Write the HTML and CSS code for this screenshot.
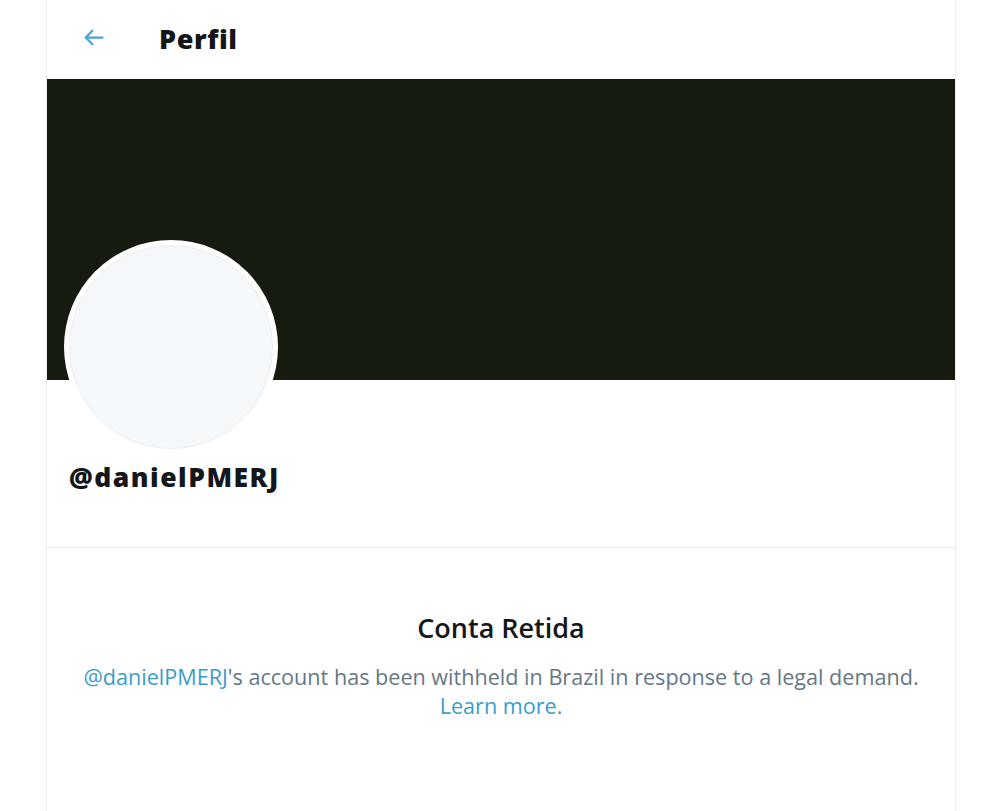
FILE: index.html
```html
<!DOCTYPE html>
<html lang="pt">
<head>
<meta charset="utf-8">
<title>Perfil</title>
<link rel="stylesheet" href="styles.css">
</head>
<body>
<main class="column">
  <header class="topbar">
    <span class="back" aria-label="Voltar">
      <svg viewBox="0 0 24 24" width="27" height="27"><path d="M20 11H7.414l4.293-4.293a1 1 0 0 0-1.414-1.414l-6 6a1 1 0 0 0 0 1.414l6 6a.996.996 0 0 0 1.414 0 1 1 0 0 0 0-1.414L7.414 13H20a1 1 0 1 0 0-2z" fill="#47a3d9"/></svg>
    </span>
    <h1 class="title">Perfil</h1>
  </header>
  <div class="banner"></div>
  <section class="profile">
    <div class="avatar"><div class="avatar-inner"></div></div>
    <div class="handle">@danielPMERJ</div>
  </section>
  <section class="withheld">
    <h2 class="withheld-title">Conta Retida</h2>
    <p class="withheld-text"><a class="link">@danielPMERJ</a>'s account has been withheld in Brazil in response to a legal demand. <a class="link">Learn more.</a></p>
  </section>
</main>
</body>
</html>
```
FILE: styles.css
```css
html, body {
  margin: 0;
  padding: 0;
  background: #ffffff;
}
body {
  font-family: "Open Sans", "Noto Sans", "Liberation Sans", sans-serif;
  color: #14171a;
}
.column {
  margin-left: 46px;
  width: 910px;
  min-height: 811px;
  box-sizing: border-box;
  border-left: 1px solid #eceeef;
  border-right: 1px solid #eceeef;
}
.topbar {
  height: 79px;
  display: flex;
  align-items: center;
  box-sizing: border-box;
  padding-left: 33px;
}
.back {
  display: flex;
  width: 27px;
  height: 27px;
  margin-top: -4px;
}
.title {
  margin: -3px 0 0 52px;
  font-size: 27px;
  font-weight: 800;
  color: #14171a;
  letter-spacing: 0.6px;
}
.banner {
  height: 301px;
  background: #161b10;
}
.profile {
  display: flow-root;
  height: 168px;
  box-sizing: border-box;
  padding-left: 17px;
  border-bottom: 1px solid #e8eaeb;
}
.avatar {
  width: 214px;
  height: 214px;
  border-radius: 50%;
  background: #ffffff;
  margin-top: -140px;
  box-sizing: border-box;
  padding: 6px;
  position: relative;
}
.avatar-inner {
  width: 100%;
  height: 100%;
  border-radius: 50%;
  background: #f5f8fa;
  box-shadow: 0 0 0 1px #eceeef;
}
.handle {
  font-size: 26.5px;
  font-weight: 800;
  letter-spacing: 1.5px;
  line-height: 36px;
  margin-top: 5px;
  margin-left: 5px;
  color: #14171a;
}
.withheld {
  text-align: center;
  padding-top: 63px;
}
.withheld-title {
  margin: 0;
  font-size: 27px;
  font-weight: 600;
  line-height: 34px;
  color: #14171a;
}
.withheld-text {
  margin: 17px auto 0;
  width: 850px;
  font-size: 21.6px;
  line-height: 29px;
  color: #657786;
}
.link {
  color: #3b9ccb;
  text-decoration: none;
}
```
